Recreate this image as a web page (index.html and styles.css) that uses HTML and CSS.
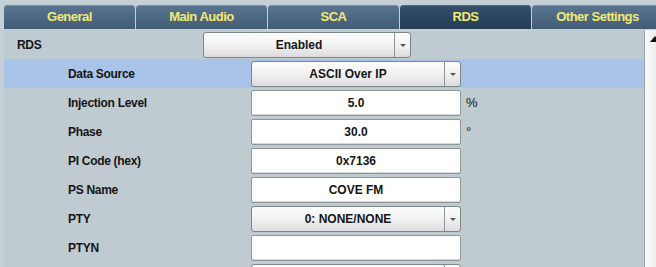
FILE: index.html
```html
<!DOCTYPE html>
<html lang="en">

<head>
    <meta charset="UTF-8">
    <meta name="viewport" content="width=device-width, initial-scale=1.0">
    <title>RDS</title>
    <link rel="stylesheet" href="styles.css">
</head>

<body>
    <div class="tabs">
        <div class="tab">General</div>
        <div class="tab">Main Audio</div>
        <div class="tab">SCA</div>
        <div class="tab active">RDS</div>
        <div class="tab">Other Settings</div>
    </div>
    <div class="main">
        <div class="panel">
            <div class="row top">
                <div class="label">RDS</div>
                <div class="select narrow"><span class="value">Enabled</span><span class="arrow"></span></div>
            </div>
            <div class="row hl">
                <div class="label">Data Source</div>
                <div class="select"><span class="value">ASCII Over IP</span><span class="arrow"></span></div>
            </div>
            <div class="row">
                <div class="label">Injection Level</div>
                <div class="input">5.0</div>
                <div class="unit">%</div>
            </div>
            <div class="row">
                <div class="label">Phase</div>
                <div class="input">30.0</div>
                <div class="unit">°</div>
            </div>
            <div class="row">
                <div class="label">PI Code (hex)</div>
                <div class="input">0x7136</div>
            </div>
            <div class="row">
                <div class="label">PS Name</div>
                <div class="input">COVE FM</div>
            </div>
            <div class="row">
                <div class="label">PTY</div>
                <div class="select"><span class="value">0: NONE/NONE</span><span class="arrow"></span></div>
            </div>
            <div class="row">
                <div class="label">PTYN</div>
                <div class="input"></div>
            </div>
            <div class="row">
                <div class="label"></div>
                <div class="select"><span class="value"></span><span class="arrow"></span></div>
            </div>
        </div>
        <div class="scrollbar">
            <span class="up"></span>
        </div>
    </div>
</body>

</html>
```

FILE: styles.css
```css
html,
body {
    margin: 0;
    height: 267px;
    overflow: hidden;
}

body {
    background: #c4cfd6;
    font-family: "Liberation Sans", Arial, sans-serif;
    font-size: 12px;
    font-weight: bold;
    color: #151515;
}

.tabs {
    display: flex;
    gap: 1px;
    padding: 5px 0 0 4px;
    height: 30px;
    box-sizing: border-box;
    background: #c4cfd6;
}

.tab {
    flex: 0 0 131px;
    height: 24px;
    line-height: 24px;
    text-align: center;
    font-size: 13px;
    color: #f2ea72;
    letter-spacing: -0.5px;
    border-radius: 4px 4px 0 0;
    background: linear-gradient(#5a7591, #435c76);
    box-shadow: inset 0 1px 0 #7690aa;
}

.tab.active {
    background: linear-gradient(#34506c, #253c55);
    box-shadow: inset 0 1px 0 #4c6783;
}

.main {
    display: flex;
    height: 237px;
}

.panel {
    flex: 1;
    margin-left: 4px;
    background: #bfcad1;
}

.row {
    display: flex;
    align-items: center;
    height: 29px;
}

.row.hl {
    background: #a9c4e8;
}

.label {
    width: 183px;
    padding-left: 64px;
    letter-spacing: -0.3px;
}

.row.top .label {
    width: 186px;
    padding-left: 13px;
}

.input,
.select {
    box-sizing: border-box;
    width: 210px;
    height: 26px;
    border: 1px solid #8f9699;
    border-radius: 2px;
}

.input {
    background: #fff;
    line-height: 24px;
    text-align: center;
    box-shadow: inset 0 -1px 0 #d8d8d8;
}

.select {
    display: flex;
    border-radius: 3px;
    border-color: #7e8588;
    background: linear-gradient(#fdfdfd, #f0f0f1 55%, #dcdcde);
}

.select.narrow {
    width: 208px;
}

.select .value {
    flex: 1;
    line-height: 24px;
    text-align: center;
}

.select .arrow {
    flex: 0 0 15px;
    border-left: 1px solid #8d9396;
    position: relative;
}

.select .arrow::after {
    content: "";
    position: absolute;
    left: 5px;
    top: 11px;
    border-left: 3px solid transparent;
    border-right: 3px solid transparent;
    border-top: 3px solid #555;
}

.unit {
    margin-left: 5px;
    font-weight: normal;
    font-size: 13px;
}

.scrollbar {
    flex: 0 0 11px;
    background: linear-gradient(90deg, #fafafa, #eeeeee);
    border-left: 1px solid #9aa3a8;
    position: relative;
}

.scrollbar .up {
    position: absolute;
    left: 5px;
    top: 6px;
    border-left: 5px solid transparent;
    border-right: 5px solid transparent;
    border-bottom: 6px solid #111;
}
```
